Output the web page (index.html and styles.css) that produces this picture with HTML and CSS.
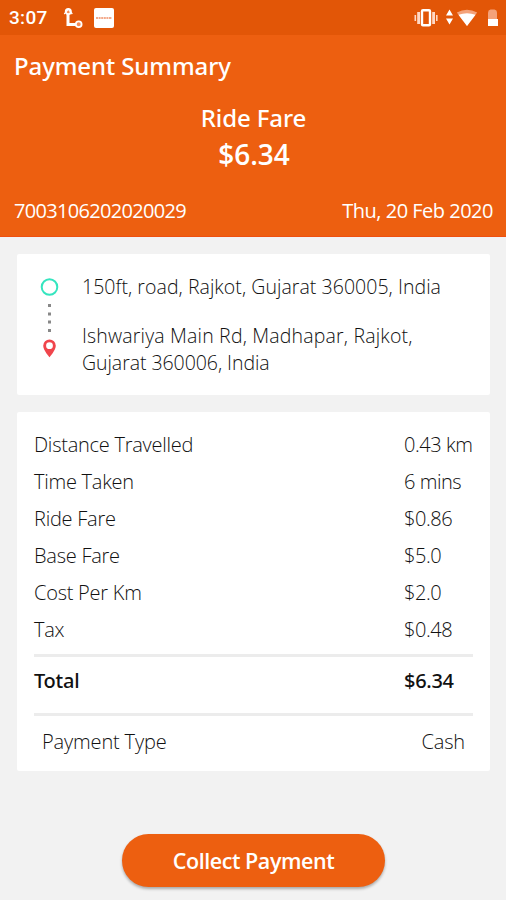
FILE: index.html
```html
<!DOCTYPE html>
<html lang="en">
<head>
<meta charset="utf-8">
<title>Payment Summary</title>
<link rel="stylesheet" href="styles.css">
</head>
<body>
<header class="header">
  <div class="status">
    <span class="clock">3:07</span>
    <svg class="route-icon" width="20" height="22" viewBox="0 0 20 22"><path d="M5 4v13.500h11" fill="none" stroke="#fff" stroke-width="3"/><circle cx="5.300" cy="4.500" r="2.600" fill="#f58b55" stroke="#fff" stroke-width="1.800"/><path d="M1.300 7 5.300 2l4 5" fill="none" stroke="#fff" stroke-width="1.300"/><circle cx="15.700" cy="17.300" r="2.900" fill="#f58b55" stroke="#fff" stroke-width="1.800"/></svg>
    <svg class="app-icon" width="20" height="20" viewBox="0 0 20 20"><rect width="20" height="20" rx="2" fill="#fff"/><path d="M2 10h16" stroke="#f3a98a" stroke-width="2" stroke-dasharray="2 .6"/></svg>
    <svg class="system-icons" width="88" height="22" viewBox="0 0 88 22">
      <rect x="10" y="3.2" width="8" height="15" rx="1" fill="none" stroke="#fff" stroke-width="2.4"/>
      <path d="M6.6 5v12M21.6 5v12" stroke="#ffd8c4" stroke-width="2.8"/><path d="M3.3 8v6M24.8 8v6" stroke="#ffd8c4" stroke-width="1.6"/>
      <path d="m37.5 2.5 3.5 6h-7zM37.5 17.5l3.5-6h-7z" fill="#fff"/>
      <path d="M44.8 5.5q10.2-5.5 20.4 0L55 19z" fill="#f4a27a"/><path d="M46.5 7.7q8.5-3 17 0L55 19z" fill="#fff"/>
      <path d="M76 5.5q0-2.500 2.500-3h4q2.500.500 2.500 3V12H76z" fill="#f4a27a"/><path d="M76 12h10v7H76z" fill="#fff"/>
    </svg>
  </div>
  <h1 class="title">Payment Summary</h1>
  <div class="fare-label">Ride Fare</div>
  <div class="fare">$6.34</div>
  <div class="meta"><span>7003106202020029</span><span class="date">Thu, 20 Feb 2020</span></div>
</header>
<main class="content">
  <section class="card route">
    <svg width="20" height="90" viewBox="0 0 20 90"><circle cx="9.5" cy="12" r="7.8" fill="none" stroke="#35e5bf" stroke-width="2"/><g fill="#888"><path d="M8 29h3v3H8zM8 37.4h3v3H8zM8 45.6h3v3H8zM8 54h3v3H8z"/></g><path fill="#f0454c" fill-rule="evenodd" d="M9.500 64.500a6.300 6.300 0 0 0-6.300 6.300c0 4.500 6.300 11.500 6.300 11.500s6.300-7 6.300-11.500a6.300 6.300 0 0 0-6.300-6.300zm0 2.800a3.400 3.400 0 1 1 0 6.800 3.400 3.400 0 0 1 0-6.800z"/></svg>
    <div class="places">
      <p class="place">150ft, road, Rajkot, Gujarat 360005, India</p>
      <p class="place drop"><span class="street">Ishwariya Main Rd, Madhapar, Rajkot,</span><br>Gujarat 360006, India</p>
    </div>
  </section>
  <section class="card bill">
    <div class="row"><span>Distance Travelled</span><span class="value">0.43 km</span></div>
    <div class="row"><span>Time Taken</span><span class="value">6 mins</span></div>
    <div class="row"><span>Ride Fare</span><span class="value">$0.86</span></div>
    <div class="row"><span>Base Fare</span><span class="value">$5.0</span></div>
    <div class="row"><span>Cost Per Km</span><span class="value">$2.0</span></div>
    <div class="row"><span>Tax</span><span class="value">$0.48</span></div>
    <div class="row total"><span>Total</span><span class="value">$6.34</span></div>
    <div class="payment"><span>Payment Type</span><span>Cash</span></div>
  </section>
  <button class="collect">Collect Payment</button>
</main>
</body>
</html>
```
FILE: styles.css
```css
* { box-sizing: border-box; }
body {
  margin: 0;
  height: 900px;
  overflow: hidden;
  background: #f2f2f2;
  color: #111;
  font-family: "Open Sans", "Noto Sans", sans-serif;
}
h1, p { margin: 0; }
.header {
  height: 237px;
  background: #ed5f10;
  border-bottom: 1px solid #ef4f10;
  color: #fff;
}
.status {
  display: flex;
  align-items: center;
  height: 35px;
  padding: 0 6px 0 9px;
  background: #e25607;
}
.clock {
  width: 54px;
  font: 500 19px/35px Roboto, sans-serif;
  letter-spacing: 0.3px;
}
.app-icon { margin-left: 11px; }
.system-icons { margin-left: auto; }
.title {
  padding-left: 14px;
  font-family: "Noto Sans", sans-serif;
  font-size: 24px;
  font-weight: 500;
  line-height: 62px;
  letter-spacing: -0.1px;
}
.fare-label {
  margin-top: 5px;
  padding-left: 1px;
  text-align: center;
  font-family: "Noto Sans", sans-serif;
  font-size: 24px;
  font-weight: 500;
  line-height: 32px;
  letter-spacing: -0.1px;
}
.fare {
  padding-left: 2px;
  text-align: center;
  font-size: 28px;
  font-weight: 600;
  line-height: 40px;
}
.meta {
  display: flex;
  justify-content: space-between;
  margin-top: 22px;
  padding: 0 13px 0 14px;
  font-size: 20px;
  line-height: 30px;
  letter-spacing: -0.68px;
}
.date { letter-spacing: -0.5px; }
.content {
  display: flex;
  flex-direction: column;
  padding: 17px 16px 0 17px;
}
.card { background: #fff; border-radius: 2px; }
.route {
  display: flex;
  height: 141px;
  padding: 21px 24px 0 23px;
}
.places { margin: -2px 0 0 22px; }
.place {
  white-space: nowrap;
  font-size: 19.5px;
  font-weight: 300;
  line-height: 27px;
  letter-spacing: 0.05px;
}
.place.drop { margin-top: 22px; letter-spacing: -0.05px; }
.street { letter-spacing: 0.18px; }
.bill {
  height: 359px;
  margin-top: 17px;
  padding: 14px 17px 0;
}
.row {
  display: grid;
  grid-template-columns: 1fr 69px;
  white-space: nowrap;
  font-size: 20px;
  font-weight: 300;
  line-height: 37px;
  letter-spacing: -0.25px;
}
.value { letter-spacing: -0.45px; }
.row.total {
  height: 62px;
  margin-top: 5.5px;
  border-top: 3px solid #ececec;
  border-bottom: 3px solid #ececec;
  font-family: "Noto Sans", sans-serif;
  font-weight: 500;
  line-height: 48px;
}
.total .value { letter-spacing: -0.3px; }
.payment {
  display: flex;
  justify-content: space-between;
  padding: 0 8px;
  font-size: 20px;
  font-weight: 300;
  line-height: 51px;
  letter-spacing: -0.15px;
}
.collect {
  align-self: center;
  width: 263px;
  height: 53px;
  margin-top: 62.5px;
  padding: 0;
  border: 0;
  border-radius: 27px;
  background: #ed5f10;
  box-shadow: 0 2px 3px #0000004d;
  color: #fff;
  font: 600 21.5px/53px "Open Sans", "Noto Sans", sans-serif;
  letter-spacing: -0.45px;
}
```
